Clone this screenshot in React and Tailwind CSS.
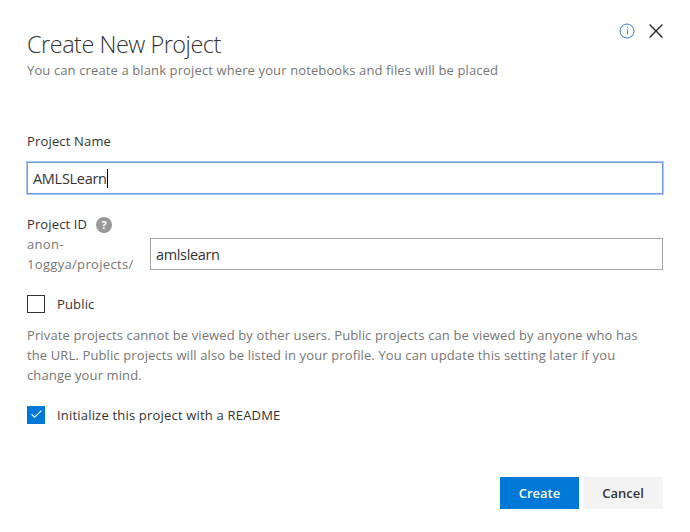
import React from "react";

function InfoIcon() {
  return (
    <svg className="block h-4 w-4" viewBox="0 0 16 16" fill="none">
      <circle cx="8" cy="8" r="7" stroke="#2b7cd3" strokeWidth="1" />
      <path d="M8.5 6.5v5M8.5 4v1.2" stroke="#5b6fd6" strokeWidth="1" />
    </svg>
  );
}

function CloseIcon() {
  return (
    <svg className="block h-4 w-4" viewBox="0 0 16 16" fill="none">
      <path d="M1.6 1.6l12.8 12.8M14.4 1.6L1.6 14.4" stroke="#262626" strokeWidth="1.35" />
    </svg>
  );
}

function Checkbox({ checked, label, children }) {
  return (
    <div className="flex h-5 items-center">
      <span
        role="checkbox"
        aria-checked={checked}
        className={
          checked
            ? "flex h-[18px] w-[18px] items-center justify-center bg-[#0078d7]"
            : "h-[18px] w-[18px] border border-[#333333] bg-white"
        }
      >
        {checked && (
          <svg className="block h-[18px] w-[18px]" viewBox="0 0 18 18" fill="none">
            <path d="M4.5 8.2l3 3 7-6.6" stroke="#fff" strokeWidth="1.1" />
          </svg>
        )}
      </span>
      <span className={"ml-3 whitespace-nowrap " + label}>{children}</span>
    </div>
  );
}

export default function App() {
  return (
    <div className="h-[532px] w-[690px] overflow-hidden bg-white pt-[23px] pr-[26px] pl-[27px] font-['Open_Sans','Noto_Sans',sans-serif] text-[13px] leading-5 text-[#333333]">
      <header className="flex h-[108px] justify-between">
        <div>
          <h1 className="mt-[6px] h-[31px] whitespace-nowrap text-[23.5px] leading-[30px] font-light tracking-[-0.5px]">
            Create New Project
          </h1>
          <p className="whitespace-nowrap tracking-[0.12px] text-[#767676]">
            You can create a blank project where your notebooks and files will be placed
          </p>
        </div>
        <div className="flex gap-[13px]">
          <InfoIcon />
          <CloseIcon />
        </div>
      </header>

      <main className="pr-px">
        <label className="block whitespace-nowrap tracking-[0.16px]">Project Name</label>
        <div className="mt-[11px] flex h-8 items-center border border-[#6f9be0] pl-[5px] text-[14.5px] tracking-[-0.3px] shadow-[0_0_0_1px_#a8c7fa]">
          <span className="whitespace-nowrap pt-px">AMLSLearn</span>
          <span className="h-[19px] w-px bg-black" />
        </div>

        <div className="mt-5 flex h-5 items-center">
          <span className="w-[60px] whitespace-nowrap tracking-[0.12px]">Project ID</span>
          <span className="ml-[9px] mt-px flex h-4 w-4 items-center justify-center rounded-full bg-[#999999] text-[11px] leading-4 font-bold text-white">
            ?
          </span>
        </div>
        <div className="flex h-10">
          <div className="w-[123px] tracking-[0.32px] text-[#767676]">
            <div>anon-</div>
            <div className="whitespace-nowrap">1oggya/projects/</div>
          </div>
          <div className="mt-1 flex h-8 flex-1 items-center border border-[#a6a6a6] pt-px pl-[5px] text-[14.5px] tracking-[-0.35px]">
            amlslearn
          </div>
        </div>

        <div className="mt-5">
          <Checkbox checked={false} label="tracking-[0.15px]">Public</Checkbox>
        </div>
        <div className="mt-[11px] whitespace-nowrap tracking-[0.12px] text-[#767676]">
          <p>Private projects cannot be viewed by other users. Public projects can be viewed by anyone who has</p>
          <p>the URL. Public projects will also be listed in your profile. You can update this setting later if you</p>
          <p>change your mind.</p>
        </div>
        <div className="mt-5">
          <Checkbox checked label="tracking-[0.19px]">Initialize this project with a README</Checkbox>
        </div>

        <footer className="mt-[52px] flex justify-end gap-1 font-semibold">
          <button className="h-8 w-[79px] bg-[#0078d7] text-white">Create</button>
          <button className="h-8 w-20 bg-[#f4f4f4]">Cancel</button>
        </footer>
      </main>
    </div>
  );
}
